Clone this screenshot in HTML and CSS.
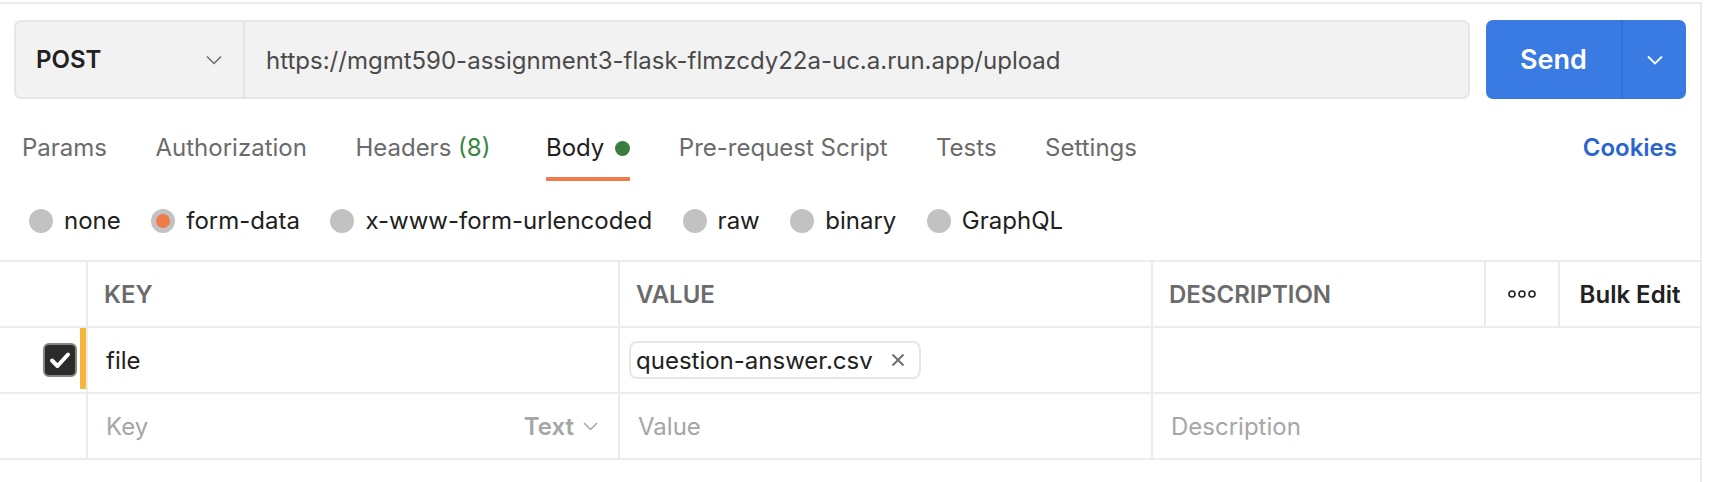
FILE: index.html
```html
<!DOCTYPE html>
<html lang="en">
<head>
<meta charset="utf-8">
<title>Postman request</title>
<link rel="stylesheet" href="styles.css">
</head>
<body>
<div class="panel">
  <div class="url-row">
    <div class="url-bar">
      <div class="method">
        <span class="method-name">POST</span>
        <svg class="method-chev" width="16" height="10" viewBox="0 0 16 10"><path d="M1 1.5 L8 8.5 L15 1.5" fill="none" stroke="#6b6b6b" stroke-width="1.5"/></svg>
      </div>
      <div class="url-text">https://mgmt590-assignment3-flask-flmzcdy22a-uc.a.run.app/upload</div>
    </div>
    <div class="send">
      <span class="send-label">Send</span>
      <span class="send-arrow"><svg width="16" height="10" viewBox="0 0 16 10"><path d="M1 1.5 L8 8.5 L15 1.5" fill="none" stroke="#ffffff" stroke-width="1.8"/></svg></span>
    </div>
  </div>

  <div class="tabs">
    <div class="tab-list">
      <span class="tab">Params</span>
      <span class="tab">Authorization</span>
      <span class="tab headers">Headers <span class="count">(8)</span></span>
      <span class="tab active">Body<span class="dot"></span></span>
      <span class="tab">Pre-request Script</span>
      <span class="tab">Tests</span>
      <span class="tab">Settings</span>
    </div>
    <span class="cookies">Cookies</span>
  </div>

  <div class="body-types">
    <span class="radio"><span class="circle"></span>none</span>
    <span class="radio"><span class="circle on"></span>form-data</span>
    <span class="radio"><span class="circle"></span>x-www-form-urlencoded</span>
    <span class="radio"><span class="circle"></span>raw</span>
    <span class="radio"><span class="circle"></span>binary</span>
    <span class="radio"><span class="circle"></span>GraphQL</span>
  </div>

  <div class="table">
    <div class="row head">
      <div class="cell first"></div>
      <div class="cell th">KEY</div>
      <div class="cell th">VALUE</div>
      <div class="cell th">DESCRIPTION</div>
      <div class="cell more">
        <svg width="28" height="10" viewBox="0 0 28 10"><circle cx="4" cy="5" r="3" fill="none" stroke="#212121" stroke-width="1.6"/><circle cx="14" cy="5" r="3" fill="none" stroke="#212121" stroke-width="1.6"/><circle cx="24" cy="5" r="3" fill="none" stroke="#212121" stroke-width="1.6"/></svg>
      </div>
      <div class="cell bulk">Bulk Edit</div>
    </div>

    <div class="row">
      <div class="cell first">
        <span class="checkbox"><svg width="22" height="18" viewBox="0 0 22 18"><path d="M3 9.5 L8.5 15 L19 3.5" fill="none" stroke="#ffffff" stroke-width="4" stroke-linecap="round" stroke-linejoin="round"/></svg></span>
        <span class="edit-bar"></span>
      </div>
      <div class="cell td">file</div>
      <div class="cell td value-cell">
        <span class="chip">question-answer.csv
          <svg class="chip-x" width="14" height="14" viewBox="0 0 14 14"><path d="M1.5 1.5 L12.5 12.5 M12.5 1.5 L1.5 12.5" stroke="#6b6b6b" stroke-width="1.8" fill="none"/></svg>
        </span>
      </div>
      <div class="cell td"></div>
    </div>

    <div class="row">
      <div class="cell first"></div>
      <div class="cell td key-cell">
        <span class="ph">Key</span>
        <span class="type">Text
          <svg width="15" height="9" viewBox="0 0 15 9"><path d="M1 1 L7.5 7.5 L14 1" fill="none" stroke="#a6a6a6" stroke-width="1.5"/></svg>
        </span>
      </div>
      <div class="cell td"><span class="ph">Value</span></div>
      <div class="cell td"><span class="ph">Description</span></div>
    </div>
  </div>
</div>
</body>
</html>
```

FILE: styles.css
```css
* { box-sizing: border-box; }

html, body {
  margin: 0;
  padding: 0;
  background: #ffffff;
}

body {
  font-family: Inter, "Noto Sans", "Liberation Sans", sans-serif;
  color: #212121;
  font-size: 24px;
}

.panel {
  width: 1702px;
  height: 482px;
  margin-top: 2px;
  border-top: 2px solid #ececec;
  border-right: 2px solid #ececec;
  padding-top: 16px;
}

/* URL row */
.url-row {
  display: flex;
  gap: 16px;
  padding: 0 14px;
  height: 79px;
}

.url-bar {
  flex: 1;
  display: flex;
  background: #f2f2f2;
  border: 2px solid #e6e6e6;
  border-radius: 7px;
}

.method {
  width: 229px;
  display: flex;
  align-items: center;
  justify-content: space-between;
  padding: 0 21px 0 20px;
  border-right: 2px solid #e3e3e3;
}

.method-name {
  font-weight: 600;
  font-size: 24px;
  color: #212121;
}

.url-text {
  display: flex;
  align-items: center;
  padding-left: 21px;
  padding-top: 1px;
  font-size: 24px;
  color: #4a4a4a;
}

.send {
  width: 200px;
  display: flex;
  background: #397ae3;
  border-radius: 7px;
  color: #ffffff;
}

.send-label {
  width: 135px;
  display: flex;
  align-items: center;
  justify-content: center;
  font-weight: 600;
  font-size: 27px;
}

.send-arrow {
  flex: 1;
  display: flex;
  align-items: center;
  justify-content: center;
  border-left: 2px solid #2f6fd8;
}

/* Tabs */
.tabs {
  display: flex;
  justify-content: space-between;
  align-items: flex-start;
  margin-top: 34px;
  padding: 0 23px 0 22px;
}

.tab-list {
  display: flex;
  gap: 48.5px;
}

.tab {
  display: flex;
  align-items: center;
  line-height: 30px;
  padding-bottom: 14px;
  border-bottom: 4px solid transparent;
  color: #6b6b6b;
  white-space: pre;
}

.tab.headers {
  margin-right: 7px;
}

.tab.active {
  color: #212121;
  border-bottom-color: #ef7a4a;
}

.count {
  color: #3a8540;
}

.dot {
  width: 15px;
  height: 15px;
  margin-left: 11px;
  border-radius: 50%;
  background: #3a7d3e;
}

.cookies {
  line-height: 30px;
  font-weight: 600;
  color: #2a64cf;
}

/* Body types */
.body-types {
  display: flex;
  align-items: center;
  gap: 30.5px;
  height: 79px;
  padding-left: 29px;
}

.radio {
  display: flex;
  align-items: center;
  gap: 11px;
  color: #212121;
}

.circle {
  width: 24px;
  height: 24px;
  border-radius: 50%;
  background: #c2c2c2;
  display: flex;
  align-items: center;
  justify-content: center;
}

.circle.on::after {
  content: "";
  width: 14px;
  height: 14px;
  border-radius: 50%;
  background: #ef7a4a;
}

/* Table */
.table {
  border-top: 2px solid #ececec;
}

.row {
  display: grid;
  grid-template-columns: 86px 532px 533px 1fr;
  height: 66px;
  border-bottom: 2px solid #ececec;
}

.row.head {
  grid-template-columns: 86px 532px 533px 333px 74px 1fr;
}

.cell {
  display: flex;
  align-items: center;
  border-left: 2px solid #ececec;
  min-width: 0;
}

.cell.first {
  border-left: none;
  justify-content: flex-end;
}

.th {
  padding-left: 16px;
  font-weight: 600;
  color: #6b6b6b;
}

.more {
  justify-content: center;
}

.bulk {
  justify-content: center;
  font-weight: 600;
  color: #212121;
}

.td {
  padding-left: 18px;
  color: #212121;
}

.checkbox {
  width: 34px;
  height: 34px;
  border-radius: 6px;
  background: #2b2b2b;
  border: 2.5px solid #858585;
  display: flex;
  align-items: center;
  justify-content: center;
}

.edit-bar {
  width: 6px;
  height: 61px;
  margin-left: 3px;
  align-self: flex-start;
  background: #f5b73b;
}

.value-cell {
  padding-left: 9px;
}

.chip {
  display: flex;
  align-items: center;
  gap: 18px;
  height: 38px;
  padding: 0 14px 0 5px;
  border: 2px solid #e6e6e6;
  border-radius: 8px;
}

.key-cell {
  justify-content: space-between;
  padding-right: 20px;
}

.ph {
  color: #a6a6a6;
}

.type {
  display: flex;
  align-items: center;
  gap: 9px;
  font-weight: 600;
  color: #a6a6a6;
}
```
